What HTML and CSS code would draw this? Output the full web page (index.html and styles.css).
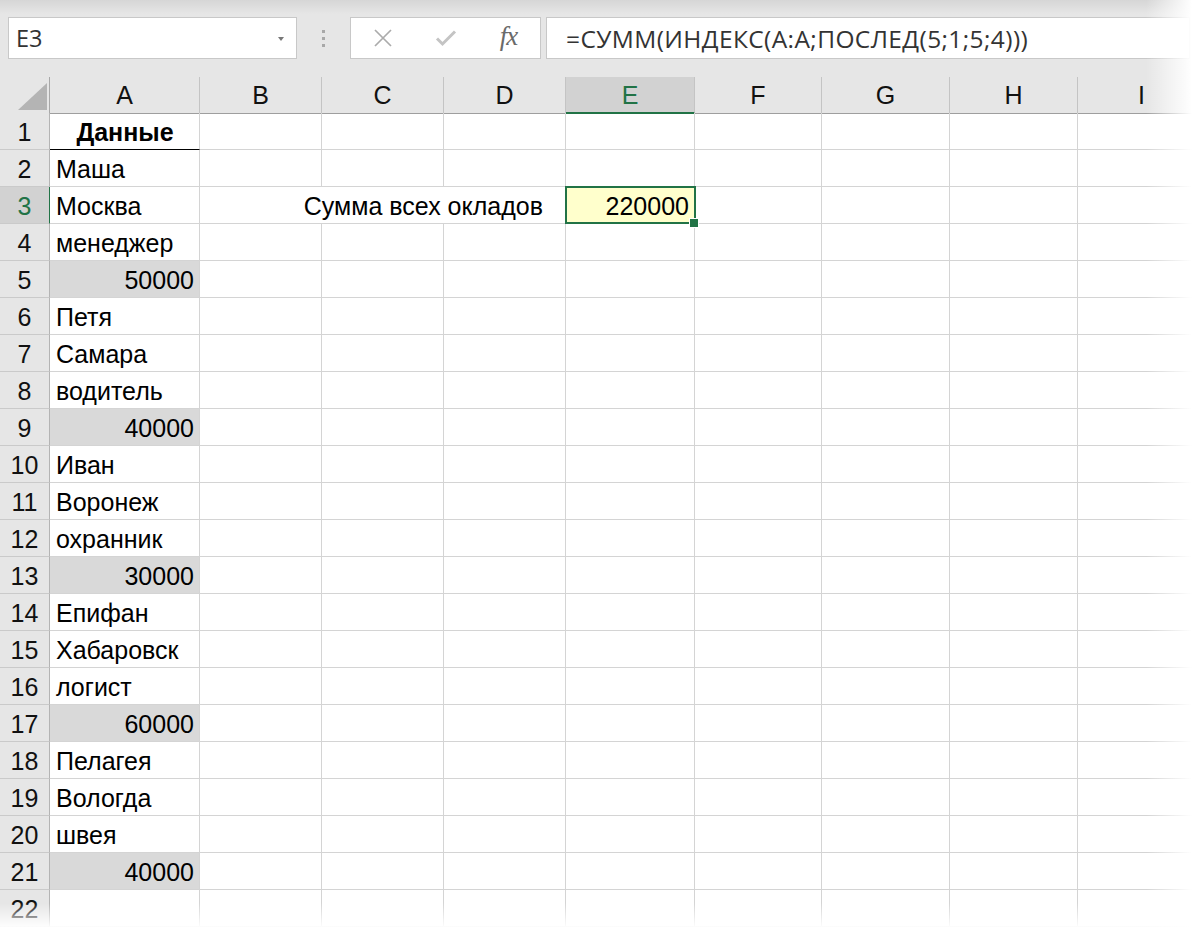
FILE: index.html
```html
<!DOCTYPE html>
<html lang="ru">
<head>
<meta charset="utf-8">
<title>Excel</title>
<link rel="stylesheet" href="styles.css">
</head>
<body>
<div class="app">
  <div class="toolbar">
    <div class="namebox"><span class="nb-text">E3</span><span class="nb-arrow"></span></div>
    <div class="grip"><span></span><span></span><span></span></div>
    <div class="btns">
      <div class="btn"><svg width="20" height="20" viewBox="0 0 20 20"><path d="M2 2 L18 18 M18 2 L2 18" stroke="#ababab" stroke-width="1.7" fill="none"/></svg></div>
      <div class="btn"><svg width="22" height="18" viewBox="0 0 22 18"><path d="M2 9.5 L7.5 15 L20 2.5" stroke="#c4c4c4" stroke-width="3" fill="none"/></svg></div>
      <div class="btn fx">fx</div>
    </div>
    <div class="formula">=СУММ(ИНДЕКС(А:А;ПОСЛЕД(5;1;5;4)))</div>
  </div>

  <div class="sheet">
    <div class="row head">
      <div class="corner"><svg width="50" height="36" viewBox="0 0 50 36"><polygon points="18,33 47,33 47,6" fill="#b4b4b4"/></svg></div>
      <div class="ch">A</div><div class="ch">B</div><div class="ch">C</div><div class="ch">D</div><div class="ch sel">E</div><div class="ch">F</div><div class="ch">G</div><div class="ch">H</div><div class="ch">I</div>
    </div>
    <div class="row"><div class="rh">1</div><div class="c bold center under">Данные</div><div class="c"></div><div class="c"></div><div class="c"></div><div class="c"></div><div class="c"></div><div class="c"></div><div class="c"></div><div class="c"></div></div>
    <div class="row"><div class="rh">2</div><div class="c">Маша</div><div class="c"></div><div class="c"></div><div class="c"></div><div class="c"></div><div class="c"></div><div class="c"></div><div class="c"></div><div class="c"></div></div>
    <div class="row"><div class="rh sel">3</div><div class="c">Москва</div><div class="c span3">Сумма всех окладов</div><div class="c num active">220000</div><div class="c"></div><div class="c"></div><div class="c"></div><div class="c"></div></div>
    <div class="row"><div class="rh">4</div><div class="c">менеджер</div><div class="c"></div><div class="c"></div><div class="c"></div><div class="c"></div><div class="c"></div><div class="c"></div><div class="c"></div><div class="c"></div></div>
    <div class="row"><div class="rh">5</div><div class="c num gray">50000</div><div class="c"></div><div class="c"></div><div class="c"></div><div class="c"></div><div class="c"></div><div class="c"></div><div class="c"></div><div class="c"></div></div>
    <div class="row"><div class="rh">6</div><div class="c">Петя</div><div class="c"></div><div class="c"></div><div class="c"></div><div class="c"></div><div class="c"></div><div class="c"></div><div class="c"></div><div class="c"></div></div>
    <div class="row"><div class="rh">7</div><div class="c">Самара</div><div class="c"></div><div class="c"></div><div class="c"></div><div class="c"></div><div class="c"></div><div class="c"></div><div class="c"></div><div class="c"></div></div>
    <div class="row"><div class="rh">8</div><div class="c">водитель</div><div class="c"></div><div class="c"></div><div class="c"></div><div class="c"></div><div class="c"></div><div class="c"></div><div class="c"></div><div class="c"></div></div>
    <div class="row"><div class="rh">9</div><div class="c num gray">40000</div><div class="c"></div><div class="c"></div><div class="c"></div><div class="c"></div><div class="c"></div><div class="c"></div><div class="c"></div><div class="c"></div></div>
    <div class="row"><div class="rh">10</div><div class="c">Иван</div><div class="c"></div><div class="c"></div><div class="c"></div><div class="c"></div><div class="c"></div><div class="c"></div><div class="c"></div><div class="c"></div></div>
    <div class="row"><div class="rh">11</div><div class="c">Воронеж</div><div class="c"></div><div class="c"></div><div class="c"></div><div class="c"></div><div class="c"></div><div class="c"></div><div class="c"></div><div class="c"></div></div>
    <div class="row"><div class="rh">12</div><div class="c">охранник</div><div class="c"></div><div class="c"></div><div class="c"></div><div class="c"></div><div class="c"></div><div class="c"></div><div class="c"></div><div class="c"></div></div>
    <div class="row"><div class="rh">13</div><div class="c num gray">30000</div><div class="c"></div><div class="c"></div><div class="c"></div><div class="c"></div><div class="c"></div><div class="c"></div><div class="c"></div><div class="c"></div></div>
    <div class="row"><div class="rh">14</div><div class="c">Епифан</div><div class="c"></div><div class="c"></div><div class="c"></div><div class="c"></div><div class="c"></div><div class="c"></div><div class="c"></div><div class="c"></div></div>
    <div class="row"><div class="rh">15</div><div class="c">Хабаровск</div><div class="c"></div><div class="c"></div><div class="c"></div><div class="c"></div><div class="c"></div><div class="c"></div><div class="c"></div><div class="c"></div></div>
    <div class="row"><div class="rh">16</div><div class="c">логист</div><div class="c"></div><div class="c"></div><div class="c"></div><div class="c"></div><div class="c"></div><div class="c"></div><div class="c"></div><div class="c"></div></div>
    <div class="row"><div class="rh">17</div><div class="c num gray">60000</div><div class="c"></div><div class="c"></div><div class="c"></div><div class="c"></div><div class="c"></div><div class="c"></div><div class="c"></div><div class="c"></div></div>
    <div class="row"><div class="rh">18</div><div class="c">Пелагея</div><div class="c"></div><div class="c"></div><div class="c"></div><div class="c"></div><div class="c"></div><div class="c"></div><div class="c"></div><div class="c"></div></div>
    <div class="row"><div class="rh">19</div><div class="c">Вологда</div><div class="c"></div><div class="c"></div><div class="c"></div><div class="c"></div><div class="c"></div><div class="c"></div><div class="c"></div><div class="c"></div></div>
    <div class="row"><div class="rh">20</div><div class="c">швея</div><div class="c"></div><div class="c"></div><div class="c"></div><div class="c"></div><div class="c"></div><div class="c"></div><div class="c"></div><div class="c"></div></div>
    <div class="row"><div class="rh">21</div><div class="c num gray">40000</div><div class="c"></div><div class="c"></div><div class="c"></div><div class="c"></div><div class="c"></div><div class="c"></div><div class="c"></div><div class="c"></div></div>
    <div class="row"><div class="rh">22</div><div class="c"></div><div class="c"></div><div class="c"></div><div class="c"></div><div class="c"></div><div class="c"></div><div class="c"></div><div class="c"></div><div class="c"></div></div>
  </div>

  <div class="fade-top"></div>
  <div class="fade-right"></div>
  <div class="fade-bottom"></div>
</div>
</body>
</html>
```

FILE: styles.css
```css
* { box-sizing: border-box; }
html, body { margin: 0; padding: 0; background: #fff; }
.app {
  position: relative;
  width: 1196px;
  height: 933px;
  overflow: hidden;
  font-family: "Liberation Sans", Arial, sans-serif;
  color: #000;
}

/* ---------- toolbar ---------- */
.toolbar {
  height: 77px;
  background: #e6e6e6;
  display: flex;
  align-items: flex-start;
  padding: 17px 0 0 8px;
}
.namebox, .btns, .formula {
  height: 42px;
  background: #fff;
  border: 1px solid #c8c8c8;
}
.namebox {
  width: 289px;
  display: flex;
  align-items: center;
  padding: 0 12px 0 7px;
  font-family: "Open Sans", "Liberation Sans", sans-serif;
  font-size: 23.5px;
  color: #333;
}
.nb-arrow {
  margin-left: auto;
  width: 0; height: 0;
  border-left: 3.5px solid transparent;
  border-right: 3.5px solid transparent;
  border-top: 4px solid #777;
  margin-top: 2px;
}
.grip {
  width: 53px;
  height: 42px;
  display: flex;
  flex-direction: column;
  align-items: center;
  justify-content: center;
  gap: 4px;
}
.grip span { width: 3px; height: 3px; background: #a8a8a8; }
.btns {
  width: 191px;
  display: flex;
  align-items: center;
}
.btn {
  width: 63px;
  height: 40px;
  display: flex;
  align-items: center;
  justify-content: center;
}
.btn.fx {
  font-family: "Liberation Serif", "Times New Roman", serif;
  font-style: italic;
  font-size: 27px;
  color: #6a6a6a;
  letter-spacing: -1px;
  padding-bottom: 4px;
}
.formula {
  flex: 1;
  margin-left: 5px;
  margin-right: 6px;
  display: flex;
  align-items: center;
  padding-left: 19px;
  font-family: "Open Sans", "Liberation Sans", sans-serif;
  font-size: 24.5px;
  letter-spacing: 0.4px;
  color: #333;
  white-space: nowrap;
}

/* ---------- sheet ---------- */
.row {
  display: grid;
  grid-template-columns: 50px 150px 122px 122px 122px 129px 127px 128px 128px 128px;
  height: 37px;
}
.row.head { height: 36px; }
.corner, .ch {
  background: #e6e6e6;
  border-right: 1px solid #c4c4c4;
  border-bottom: 1px solid #9e9e9e;
}
.corner { border-right-color: #a8a8a8; }
.corner svg { display: block; }
.ch {
  font-size: 25px;
  text-align: center;
  line-height: 33px;
  padding-top: 2px;
  color: #111;
}
.ch.sel {
  background: #d2d2d2;
  color: #217346;
  border-bottom: 2px solid #217346;
}
.rh {
  background: #e6e6e6;
  border-right: 1px solid #b4b4b4;
  border-bottom: 1px solid #cacaca;
  font-size: 25px;
  text-align: center;
  line-height: 34px;
  padding-top: 2px;
  color: #111;
}
.rh.sel {
  background: #d2d2d2;
  color: #217346;
  border-right: 1px solid #217346;
}
.c {
  border-right: 1px solid #d4d4d4;
  border-bottom: 1px solid #d4d4d4;
  font-size: 25px;
  line-height: 34px;
  padding: 2px 5px 0 6px;
  white-space: nowrap;
  overflow: visible;
}
.c.bold { font-weight: bold; }
.c.center { text-align: center; }
.c.under { border-bottom: 1px solid #000; }
.c.num { text-align: right; padding-right: 5px; }
.c.gray { background: #d9d9d9; }
.c.span3 {
  grid-column: span 3;
  display: flex;
  justify-content: flex-end;
  padding-right: 22px;
}
.c.active {
  position: relative;
  background: #ffffcc;
  padding-right: 5px;
}
.c.active::after {
  content: "";
  position: absolute;
  left: -1px; top: -1px; right: -2px; bottom: -1px;
  border: 2px solid #217346;
}
.c.active::before {
  content: "";
  position: absolute;
  right: -5px; bottom: -5px;
  width: 8px; height: 8px;
  background: #217346;
  border: 1px solid #fff;
  z-index: 2;
}

/* ---------- edge fades ---------- */
.fade-top {
  position: absolute;
  left: 0; top: 0; right: 0;
  height: 14px;
  background: linear-gradient(to bottom, rgba(0,0,0,0.07), rgba(0,0,0,0));
}
.fade-right {
  position: absolute;
  top: 0; right: 0; bottom: 0;
  width: 50px;
  background: linear-gradient(to right, rgba(255,255,255,0), #fff 92%);
}
.fade-bottom {
  position: absolute;
  left: 0; right: 0; bottom: 0;
  height: 30px;
  background: linear-gradient(to bottom, rgba(255,255,255,0), #fff 85%);
}
```
